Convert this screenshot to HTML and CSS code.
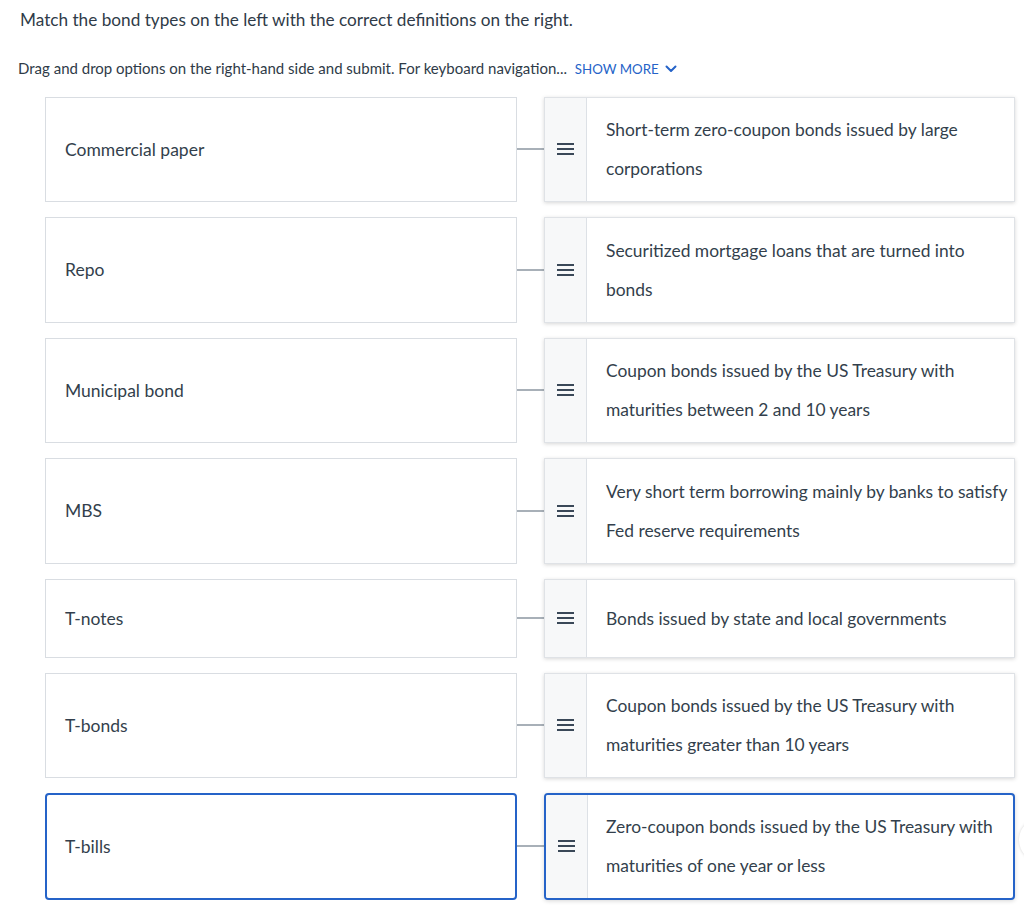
FILE: index.html
```html
<!DOCTYPE html>
<html lang="en">
<head>
<meta charset="utf-8">
<title>Match bond types</title>
<link rel="stylesheet" href="styles.css">
</head>
<body>
<div class="page">
  <p class="prompt">Match the bond types on the left with the correct definitions on the right.</p>
  <p class="hint">Drag and drop options on the right-hand side and submit. For keyboard navigation... <span class="more">SHOW MORE <svg class="chev" viewBox="0 0 12 8" width="12" height="8"><path d="M1.5 1.5 6 6l4.5-4.5" fill="none" stroke="#2563c8" stroke-width="2" stroke-linecap="round" stroke-linejoin="round"/></svg></span></p>

  <div class="board">
    <div class="term">Commercial paper</div>
    <div class="link"></div>
    <div class="def"><span class="handle"><i></i><i></i><i></i></span><span class="dtext">Short-term zero-coupon bonds issued by large corporations</span></div>

    <div class="term">Repo</div>
    <div class="link"></div>
    <div class="def"><span class="handle"><i></i><i></i><i></i></span><span class="dtext">Securitized mortgage loans that are turned into bonds</span></div>

    <div class="term">Municipal bond</div>
    <div class="link"></div>
    <div class="def"><span class="handle"><i></i><i></i><i></i></span><span class="dtext">Coupon bonds issued by the US Treasury with maturities between 2 and 10 years</span></div>

    <div class="term">MBS</div>
    <div class="link"></div>
    <div class="def"><span class="handle"><i></i><i></i><i></i></span><span class="dtext">Very short term borrowing mainly by banks to satisfy Fed reserve requirements</span></div>

    <div class="term">T-notes</div>
    <div class="link"></div>
    <div class="def short"><span class="handle"><i></i><i></i><i></i></span><span class="dtext">Bonds issued by state and local governments</span></div>

    <div class="term">T-bonds</div>
    <div class="link"></div>
    <div class="def"><span class="handle"><i></i><i></i><i></i></span><span class="dtext">Coupon bonds issued by the US Treasury with maturities greater than 10 years</span></div>

    <div class="term active">T-bills</div>
    <div class="link"></div>
    <div class="def active"><span class="handle"><i></i><i></i><i></i></span><span class="dtext">Zero-coupon bonds issued by the US Treasury with maturities of one year or less</span></div>
  </div>
  <div class="edge-bubble"></div>
</div>
</body>
</html>
```
FILE: styles.css
```css
html, body {
  margin: 0;
  padding: 0;
  background: #ffffff;
}
body {
  font-family: "Lato", "Open Sans", "Liberation Sans", sans-serif;
  color: #333f4c;
  overflow: hidden;
}
.page {
  position: relative;
  width: 1024px;
  height: 905px;
}
.prompt {
  margin: 0;
  padding: 8px 0 0 20px;
  font-size: 17.2px;
  line-height: 24px;
  color: #2f3b48;
}
.hint {
  margin: 0;
  padding: 26px 0 0 18px;
  font-size: 15px;
  line-height: 20px;
  color: #2f3b48;
}
.more {
  color: #2563c8;
  margin-left: 4px;
  font-size: 13.3px;
}
.chev {
  margin-left: 3px;
  vertical-align: 1px;
}
.board {
  margin: 17.5px 0 0 45px;
  display: grid;
  grid-template-columns: 472px 27px 471px;
  row-gap: 15px;
}
.term {
  display: flex;
  align-items: center;
  box-sizing: border-box;
  border: 1px solid #d9dde2;
  padding-left: 19px;
  font-size: 17.5px;
  color: #333f4c;
}
.link {
  display: flex;
  align-items: center;
}
.link::before {
  content: "";
  display: block;
  width: 100%;
  height: 2px;
  background: #a8b0b8;
}
.def {
  display: flex;
  box-sizing: border-box;
  border: 1px solid #dfe2e6;
  background: #fff;
  box-shadow: 0 1px 4px rgba(0, 0, 0, 0.16);
  min-height: 105.5px;
}
.def.short {
  min-height: 79px;
}
.handle {
  width: 41px;
  flex: none;
  background: #f7f8f9;
  border-right: 1px solid #dde1e6;
  display: flex;
  flex-direction: column;
  align-items: center;
  justify-content: center;
  gap: 3px;
}
.handle i {
  display: block;
  width: 17px;
  height: 2px;
  background: #3a4858;
}
.dtext {
  display: flex;
  align-items: center;
  padding: 12.75px 5px 12.75px 19px;
  font-size: 17.4px;
  line-height: 39px;
  color: #333f4c;
}
.term.active, .def.active {
  border: 2px solid #2563c8;
  border-radius: 4px;
}
.term.active {
  padding-left: 18px;
}
.def.active {
  min-height: 106.5px;
}
.def.active .dtext {
  padding: 12.25px 4px 12.25px 18px;
}
.def.active .handle {
  border-radius: 2px 0 0 2px;
}
.edge-bubble {
  position: absolute;
  left: 1019px;
  top: 818px;
  width: 44px;
  height: 44px;
  border-radius: 50%;
  background: #fff;
  box-shadow: 0 0 3px rgba(0, 0, 0, 0.18);
}
```
